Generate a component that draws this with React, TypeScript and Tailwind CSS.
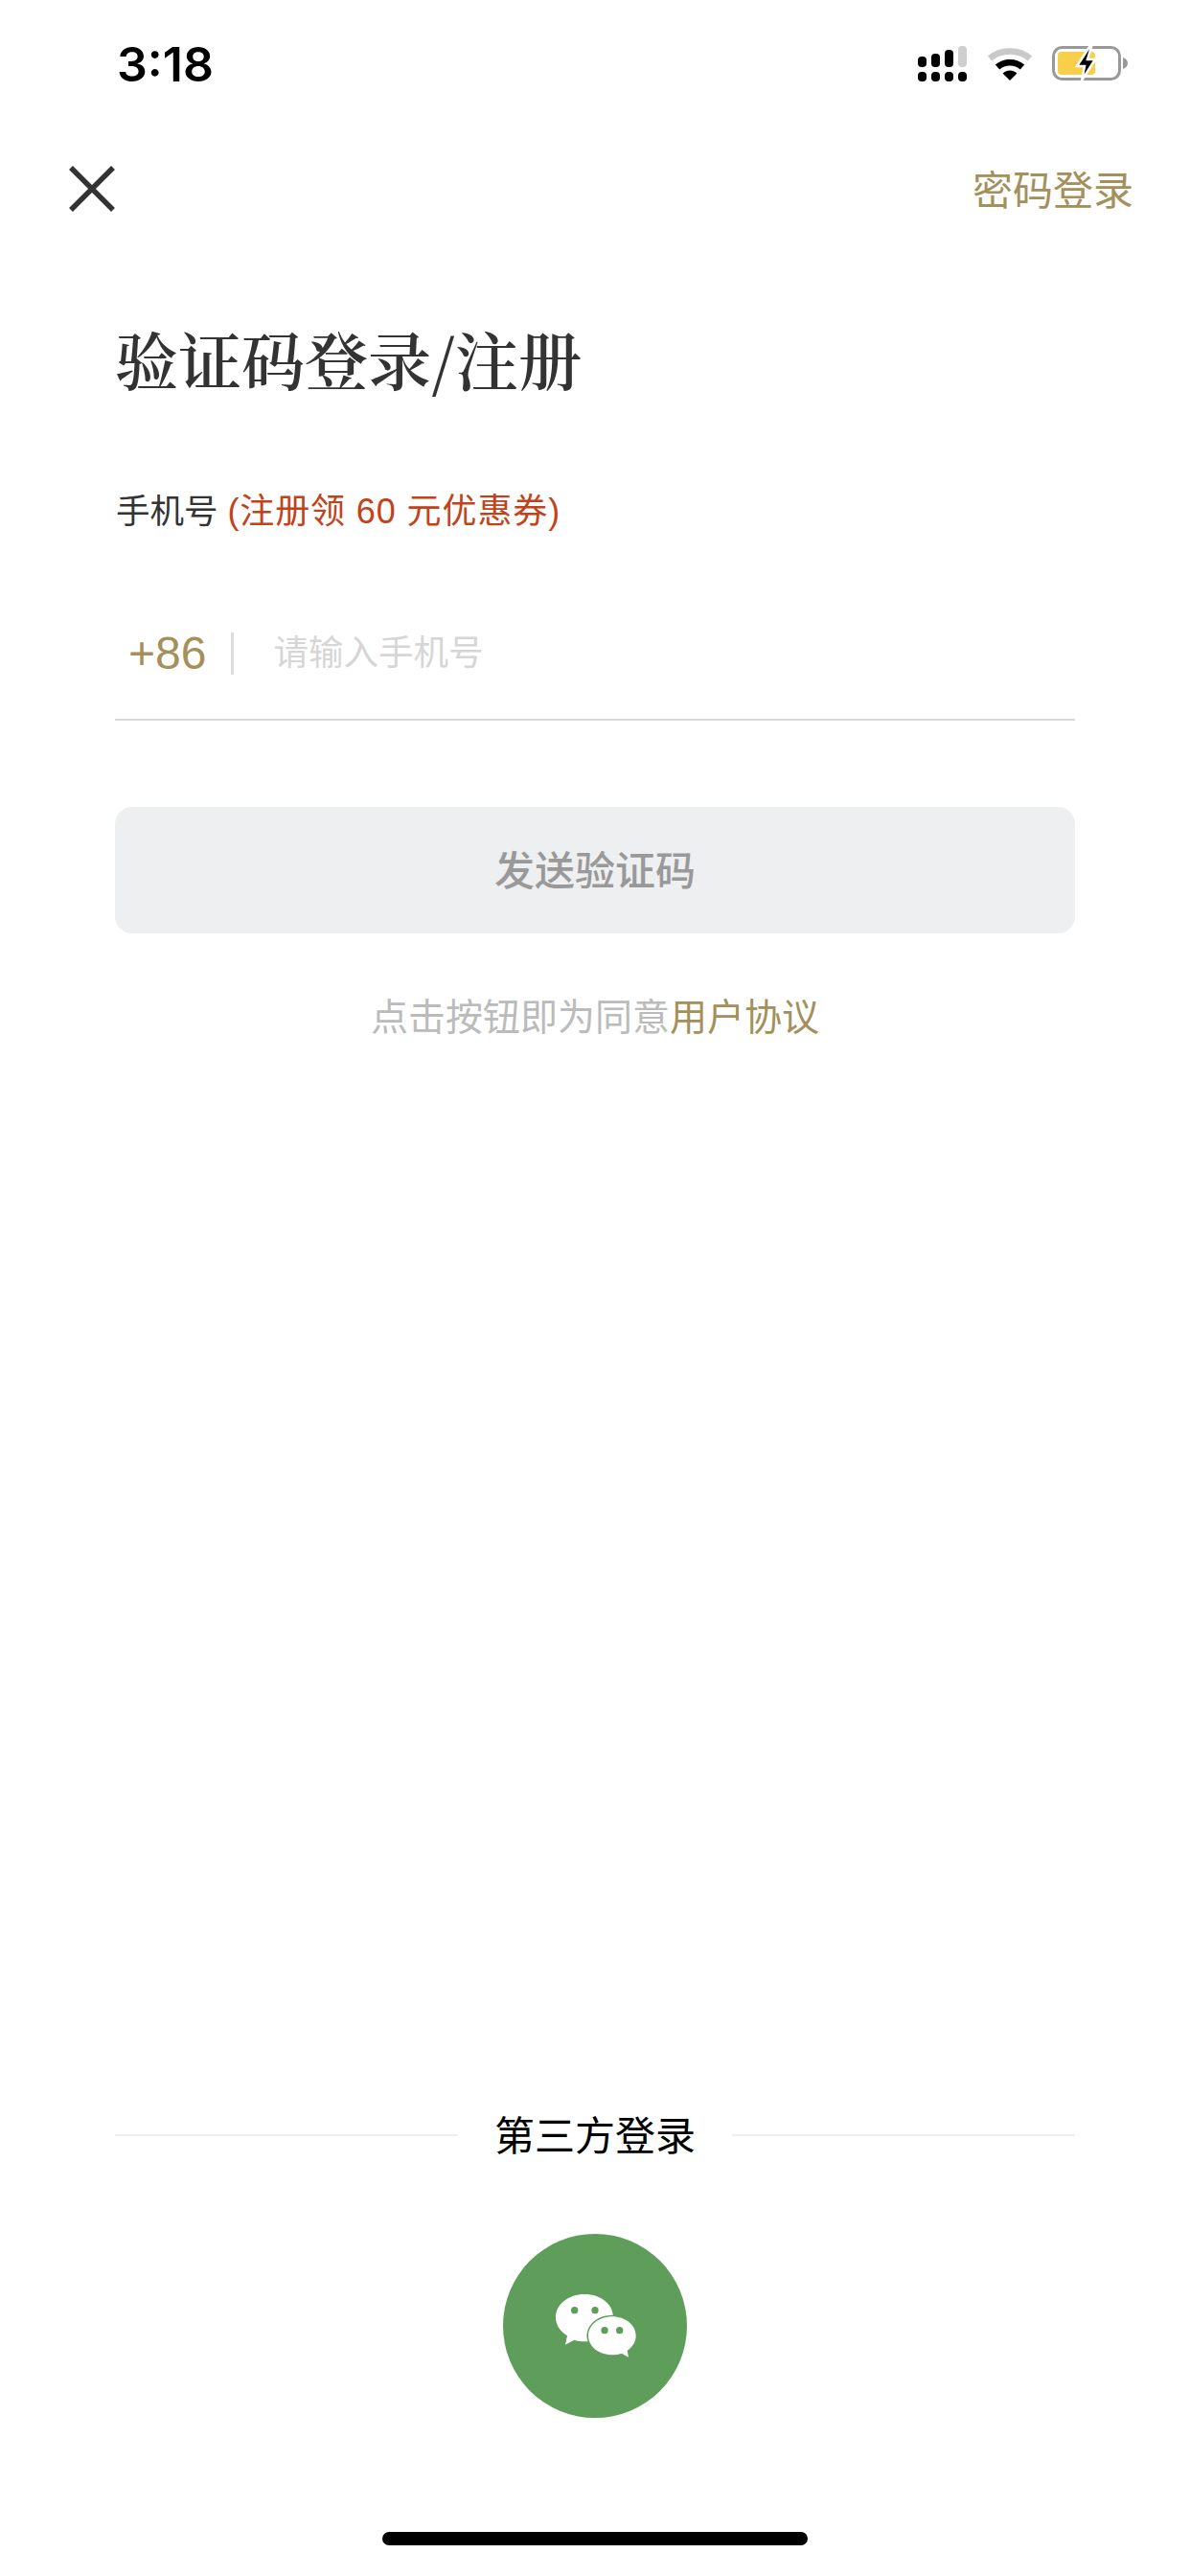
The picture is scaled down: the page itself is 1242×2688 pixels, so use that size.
const sans = "font-['Liberation_Sans','Noto_Sans_CJK_SC',sans-serif]"

const SignalIcon = () => (
    <svg width="52" height="37" viewBox="0 0 52 37" fill="#000">
        <rect x="0" y="27" width="9" height="10" rx="4" />
        <rect x="14" y="27" width="9" height="10" rx="4" />
        <rect x="28" y="27" width="9" height="10" rx="4" />
        <rect x="42" y="27" width="9" height="10" rx="4" />
        <rect x="0" y="11" width="9" height="11" rx="4" />
        <rect x="14" y="8" width="9" height="14" rx="4" />
        <rect x="28" y="4" width="9" height="18" rx="4" />
        <rect x="42" y="0" width="9" height="22" rx="4" fill="#cfcfcf" />
    </svg>
)

const WifiIcon = () => (
    <svg width="48" height="36" viewBox="0 0 48 36" fill="none">
        <path d="M3 13 C14 3 34 3 45 13" stroke="#c9c9c9" strokeWidth="6.5" />
        <path d="M11 22 C18 15.5 30 15.5 37 22" stroke="#000" strokeWidth="6.5" />
        <path d="M16.5 28.5 L24 36 L31.5 28.5 C27 24.5 21 24.5 16.5 28.5 Z" fill="#000" />
    </svg>
)

const BatteryIcon = () => (
    <svg width="80" height="36" viewBox="0 0 80 36" fill="none">
        <rect x="1.5" y="1.5" width="69" height="33" rx="9" stroke="#999" strokeWidth="3" />
        <path d="M74 12 C77 13 79 15 79 18 C79 21 77 23 74 24 Z" fill="#999" />
        <rect x="6" y="6" width="39" height="24" rx="4" fill="#f7cf4a" />
        <path d="M39 1 L26 21 L34 21 L31 36 L45 14 L37 14 L41 1 Z" fill="#000" stroke="#fff" strokeWidth="2.5" />
    </svg>
)

const WechatIcon = () => (
    <svg width="84" height="66" viewBox="0 0 252 198" className="ml-[2px]">
        <path d="M90 0 C142 0 180 32 180 72 C180 112 142 148 90 148 C78 148 68 146 58 143 L30 158 L36 130 C14 116 0 96 0 72 C0 32 40 0 90 0 Z" fill="#fff" />
        <ellipse cx="177" cy="130" rx="80" ry="65" fill="#5f9e5a" />
        <path d="M177 70 C219 70 251 97 251 130 C251 150 240 166 224 177 L228 197 L206 185 C197 188 187 190 177 190 C135 190 102 163 102 130 C102 97 135 70 177 70 Z" fill="#fff" />
        <circle cx="59" cy="50" r="11" fill="#5f9e5a" />
        <circle cx="123" cy="50" r="11" fill="#5f9e5a" />
        <circle cx="153" cy="113" r="11" fill="#5f9e5a" />
        <circle cx="200" cy="113" r="11" fill="#5f9e5a" />
    </svg>
)

const App = () => {
    return (
        <div className={`flex h-[2688px] w-[1242px] flex-col overflow-hidden bg-white ${sans}`}>
            <div className="flex h-[132px] shrink-0 items-start justify-between pl-[122px] pr-[64px]">
                <span className="mt-[37px] font-['Inter',sans-serif] text-[50px] leading-[60px] font-semibold text-black">3:18</span>
                <div className="mt-[48px] flex items-start gap-[20px]">
                    <SignalIcon />
                    <WifiIcon />
                    <BatteryIcon />
                </div>
            </div>

            <div className="flex h-[130px] shrink-0 items-center justify-between pl-[72px] pr-[59px]">
                <svg width="48" height="48" viewBox="0 0 48 48" stroke="#333" strokeWidth="5.5">
                    <path d="M2 2 L46 46 M46 2 L2 46" />
                </svg>
                <span className="mt-[6px] text-[42px] leading-[50px] text-[#a3905a]">密码登录</span>
            </div>

            <h1 className="mt-[72px] pl-[120px] font-['Noto_Serif_CJK_SC','Liberation_Serif','Noto_Sans_CJK_SC',serif] text-[66px] leading-[80px] font-semibold text-[#333]">
                验证码登录/注册
            </h1>

            <p className="mt-[98px] pl-[121px] text-[35.5px] leading-[44px] text-[#333]">
                手机号 <span className="text-[36px] tracking-[0.9px] text-[#c2431a]">(注册领 60 元优惠券)</span>
            </p>

            <div className="mx-[120px] mt-[76px] flex h-[120px] shrink-0 items-center border-b-2 border-[#d9d9d9] pb-[18px] pl-[14px]">
                <span className="text-[48px] leading-[56px] text-[#a3905a]">+86</span>
                <div className="ml-[26px] h-[44px] w-[3px] bg-[#dcdcdc]" />
                <input
                    className="ml-[41px] flex-1 text-[36.5px] outline-none placeholder:text-[#d6d6d6]"
                    placeholder="请输入手机号"
                />
            </div>

            <button className="mx-[120px] mt-[90px] flex h-[132px] shrink-0 items-center justify-center rounded-[18px] bg-[#eeeff1] pt-[3px] text-[42px] font-medium text-[#999]">
                发送验证码
            </button>

            <p className="mt-[63px] text-center text-[39px] leading-[50px] text-[#bbb]">
                点击按钮即为同意<span className="text-[#a3905a]">用户协议</span>
            </p>

            <div className="flex-1" />

            <div className="mx-[120px] flex h-[50px] shrink-0 items-center">
                <div className="h-[2px] flex-1 bg-[#efefef]" />
                <span className="mx-[38px] pt-[3px] text-[42px] leading-[50px] text-black">第三方登录</span>
                <div className="h-[2px] flex-1 bg-[#efefef]" />
            </div>

            <div className="mt-[78px] flex justify-center">
                <div className="flex h-[192px] w-[192px] items-center justify-center rounded-full bg-[#5f9e5a]">
                    <WechatIcon />
                </div>
            </div>

            <div className="mx-auto mt-[119px] mb-[32px] h-[14px] w-[444px] rounded-full bg-black" />
        </div>
    )
}

export default App
